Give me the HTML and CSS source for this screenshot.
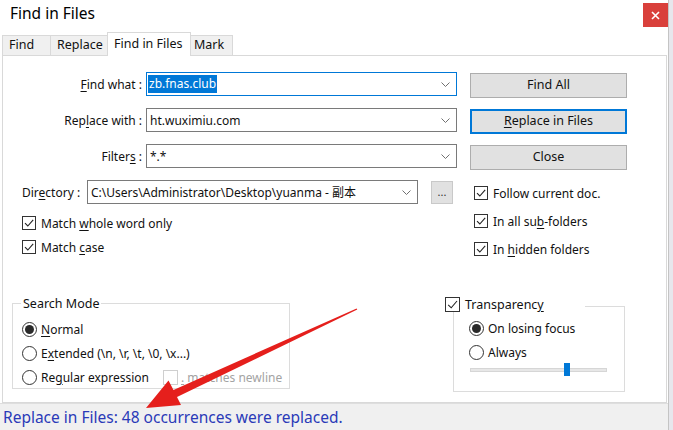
FILE: index.html
```html
<!DOCTYPE html>
<html>
<head>
<meta charset="utf-8">
<link rel="stylesheet" href="styles.css">
</head>
<body>
<div class="screen">
  <div class="window">
    <div class="titlebar">
      <span class="title">Find in Files</span>
      <span class="close"><svg width="9" height="9" viewBox="0 0 9 9"><path d="M1 1L8 8M8 1L1 8" stroke="#fff" stroke-width="1.6"/></svg></span>
    </div>
    <div class="tabs">
      <div class="tab t-find">Find</div>
      <div class="tab t-replace">Replace</div>
      <div class="tab t-files active">Find in Files</div>
      <div class="tab t-mark">Mark</div>
    </div>
    <div class="panel">
      <div class="top">
        <div class="fields">
          <div class="frow">
            <span class="lbl"><u>F</u>ind what :</span>
            <div class="combo focus"><span class="sel">zb.fnas.club</span><svg class="chev" width="9" height="5" viewBox="0 0 9 5"><path d="M0.5 0.5L4.5 4.5L8.5 0.5" fill="none" stroke="#707070"/></svg></div>
          </div>
          <div class="frow">
            <span class="lbl">Rep<u>l</u>ace with :</span>
            <div class="combo"><span class="val">ht.wuximiu.com</span><svg class="chev" width="9" height="5" viewBox="0 0 9 5"><path d="M0.5 0.5L4.5 4.5L8.5 0.5" fill="none" stroke="#707070"/></svg></div>
          </div>
          <div class="frow">
            <span class="lbl">Filter<u>s</u> :</span>
            <div class="combo"><span class="val">*.*</span><svg class="chev" width="9" height="5" viewBox="0 0 9 5"><path d="M0.5 0.5L4.5 4.5L8.5 0.5" fill="none" stroke="#707070"/></svg></div>
          </div>
          <div class="drow">
            <span class="dlbl">Dir<u>e</u>ctory :</span>
            <div class="combo dir"><span class="val">C:\Users\Administrator\Desktop\yuanma - 副本</span><svg class="chev" width="9" height="5" viewBox="0 0 9 5"><path d="M0.5 0.5L4.5 4.5L8.5 0.5" fill="none" stroke="#707070"/></svg></div>
            <span class="browse">...</span>
          </div>
          <div class="checks lchecks">
            <div class="chk"><span class="box"><svg width="12" height="12" viewBox="0 0 12 12"><path d="M2 6.2L4.8 9L10.2 2.8" fill="none" stroke="#222" stroke-width="1.1"/></svg></span><span>Match <u>w</u>hole word only</span></div>
            <div class="chk"><span class="box"><svg width="12" height="12" viewBox="0 0 12 12"><path d="M2 6.2L4.8 9L10.2 2.8" fill="none" stroke="#222" stroke-width="1.1"/></svg></span><span>Match <u>c</u>ase</span></div>
          </div>
        </div>
        <div class="side">
          <div class="btn">Find All</div>
          <div class="btn default"><u>R</u>eplace in Files</div>
          <div class="btn">Close</div>
          <div class="checks rchecks">
            <div class="chk"><span class="box"><svg width="12" height="12" viewBox="0 0 12 12"><path d="M2 6.2L4.8 9L10.2 2.8" fill="none" stroke="#222" stroke-width="1.1"/></svg></span><span>Follow current doc.</span></div>
            <div class="chk"><span class="box"><svg width="12" height="12" viewBox="0 0 12 12"><path d="M2 6.2L4.8 9L10.2 2.8" fill="none" stroke="#222" stroke-width="1.1"/></svg></span><span>In all su<u>b</u>-folders</span></div>
            <div class="chk"><span class="box"><svg width="12" height="12" viewBox="0 0 12 12"><path d="M2 6.2L4.8 9L10.2 2.8" fill="none" stroke="#222" stroke-width="1.1"/></svg></span><span>In <u>h</u>idden folders</span></div>
          </div>
        </div>
      </div>
      <div class="bottom">
        <fieldset class="group mode">
          <legend>Search Mode</legend>
          <div class="rad"><span class="circle on"></span><span><u>N</u>ormal</span></div>
          <div class="rad"><span class="circle"></span><span>E<u>x</u>tended (\n, \r, \t, \0, \x...)</span></div>
          <div class="rad"><span class="circle"></span><span>Re<u>g</u>ular expression</span><span class="box disabled"></span><span class="dtext"><u>.</u> matches newline</span></div>
        </fieldset>
        <div class="trans">
          <div class="tlegend"><span class="box"><svg width="13" height="13" viewBox="0 0 13 13"><path d="M2.2 6.8L5.2 9.8L11 3" fill="none" stroke="#222" stroke-width="1.1"/></svg></span><span>Transparenc<u>y</u></span></div>
          <div class="tbox">
            <div class="rad"><span class="circle on"></span><span>On losing focus</span></div>
            <div class="rad"><span class="circle"></span><span>Always</span></div>
            <div class="slider"><span class="thumb"></span></div>
          </div>
        </div>
      </div>
    </div>
    <div class="status">Replace in Files: 48 occurrences were replaced.</div>
  </div>
  <svg class="arrow" width="673" height="430" viewBox="0 0 673 430">
    <polygon points="146,408 181,405 177,397 357.3,309.6 356.6,308.4 173.5,390 168.5,380.5" fill="#e51f1c"/>
  </svg>
</div>
</body>
</html>
```
FILE: styles.css
```css
* { box-sizing: border-box; }
html, body { margin: 0; padding: 0; }
body {
  background: #e7e7ec;
  font-family: "Noto Sans", "Noto Sans CJK SC", sans-serif;
  font-size: 12px;
  color: #111;
}
u { text-decoration: underline; text-underline-offset: 2px; text-decoration-thickness: 1px; }
.screen { position: relative; width: 673px; height: 430px; overflow: hidden; }
.window {
  width: 669px; height: 430px;
  background: #fff;
  border-right: 1px solid #c4c4c4;
  display: flex; flex-direction: column;
}
.titlebar { height: 30px; display: flex; justify-content: space-between; align-items: flex-start; }
.title { font-size: 15.5px; padding: 3px 0 0 10px; color: #000; line-height: 20px; }
.close {
  width: 25px; height: 24px; margin-top: 3px;
  background: #d9403b;
  display: flex; align-items: center; justify-content: center;
}
.tabs { height: 25px; display: flex; align-items: flex-end; padding-left: 2px; }
.tab {
  height: 20px; line-height: 18px;
  background: #f0f0f0;
  border: 1px solid #d9d9d9; border-bottom: none;
  padding-left: 6px;
  font-size: 12.5px;
  color: #111;
  margin-right: -1px;
}
.t-find { width: 49px; }
.t-replace { width: 58px; }
.t-files { width: 84px; }
.t-mark { width: 43px; padding-left: 3px; }
.tab.active {
  height: 24px; line-height: 21px;
  background: #fff;
  position: relative; z-index: 1;
  margin-bottom: -1px;
  padding-left: 6px;
}
.panel {
  height: 348px; width: 665px; margin-left: 2px;
  border: 1px solid #d9d9d9;
  background: #fff;
  padding-top: 16px;
}
.top { display: flex; height: 184px; }
.fields { width: 455px; }
.frow {
  display: grid; grid-template-columns: 139px 311px; column-gap: 4px;
  height: 24px; margin-bottom: 12px; align-items: center;
}
.lbl { text-align: right; white-space: nowrap; }
.combo {
  height: 24px; border: 1px solid #7a7a7a; background: #fff;
  display: flex; align-items: center; justify-content: space-between;
  padding: 0 6px 0 2px; white-space: nowrap; overflow: hidden;
}
.combo.focus { border-color: #0078d7; padding-left: 1px; }
.sel { background: #0078d7; color: #fff; line-height: 18px; padding: 0 1px; }
.val { padding-left: 1px; }
.chev { flex: none; }
.drow { display: flex; align-items: center; height: 24px; padding-left: 19px; margin-bottom: 12px; }
.dlbl { width: 65px; white-space: nowrap; }
.combo.dir { width: 331px; }
.browse {
  width: 22px; height: 23px; margin-left: 13px; margin-top: 1px;
  background: #e1e1e1; border: 1px solid #c9c9c9;
  font-size: 11px; line-height: 20px; text-align: center; color: #333;
}
.checks { display: flex; flex-direction: column; }
.chk { display: flex; align-items: center; white-space: nowrap; }
.box {
  width: 14px; height: 14px; flex: none;
  border: 1px solid #333; background: #fff;
  display: flex; align-items: center; justify-content: center;
  margin-right: 5px;
}
.lchecks { padding-left: 19px; gap: 10px; }
.lchecks .chk { height: 14px; }
.side { width: 157px; margin-left: 12px; padding-top: 1px; }
.btn {
  height: 25px; margin-bottom: 11px;
  background: #e1e1e1; border: 1px solid #adadad;
  text-align: center; line-height: 22px; font-size: 12.5px; color: #111;
}
.btn.default { border: 2px solid #0078d7; line-height: 20px; }
.rchecks { margin-top: 16px; padding-left: 4px; gap: 14px; }
.rchecks .chk { height: 14px; }
.bottom { display: flex; align-items: flex-start; margin-top: 39px; }
.group {
  margin: 0 0 0 9px; padding: 7px 0 0 9px;
  width: 278px; height: 94px;
  border: 1px solid #dcdcdc;
  min-inline-size: 0;
}
.group legend { padding: 0 2px; margin-left: -1px; font-size: 12.5px; line-height: 17px; color: #111; }
.rad { display: flex; align-items: center; height: 20px; margin-bottom: 4px; white-space: nowrap; overflow: hidden; }
.circle {
  width: 15px; height: 15px; flex: none;
  border: 1px solid #333; border-radius: 50%; background: #fff;
  margin-right: 4px;
  display: flex; align-items: center; justify-content: center;
}
.circle.on::after { content: ""; width: 9px; height: 9px; border-radius: 50%; background: #2a2a2a; }
.box.disabled { border-color: #cfcfcf; width: 15px; height: 15px; margin-left: 14px; margin-right: 3px; }
.dtext { color: #a3a3a3; }
.trans { margin-left: 155px; margin-top: 2px; width: 180px; }
.tlegend {
  display: inline-flex; align-items: center; height: 15px;
  width: 140px; background: #fff;
  position: relative; z-index: 1;
  font-size: 12.5px; white-space: nowrap;
}
.tlegend .box { width: 15px; height: 15px; margin-right: 5px; }
.tbox {
  margin-left: 8px; margin-top: -9px;
  width: 172px; height: 86px;
  border: 1px solid #dcdcdc;
  padding: 11px 0 0 15px;
}
.slider {
  position: relative;
  width: 137px; height: 4px; margin-left: 1px; margin-top: 6px;
  background: #e7e7e7; border: 1px solid #d6d6d6;
}
.thumb {
  position: absolute; left: 93px; top: -6px;
  width: 6px; height: 13px; background: #0078d7;
}
.status {
  height: 27px; background: #f0f0f0; border-top: 1px solid #dedede;
  color: #2a3ab8; font-size: 15.5px; line-height: 26px; padding-left: 3px;
  white-space: nowrap;
}
.arrow { position: absolute; left: 0; top: 0; pointer-events: none; }
```
